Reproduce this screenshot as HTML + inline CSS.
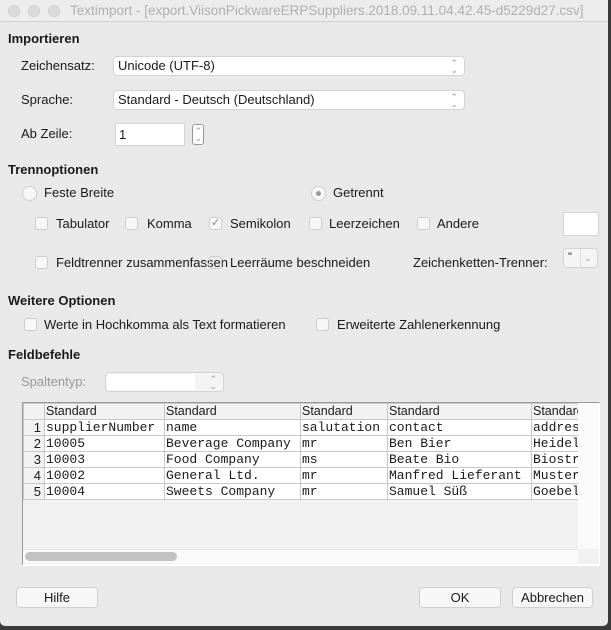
<!DOCTYPE html>
<html><head><meta charset="utf-8"><style>
*{box-sizing:border-box;margin:0;padding:0}
body{width:611px;height:630px;background:#3a3a3a;font-family:"Liberation Sans",sans-serif;font-size:13px;color:#1a1a1a;position:relative;overflow:hidden}
.win{position:absolute;left:0;top:0;width:608px;height:626px;background:#e9e9e9;border-radius:0 0 5px 5px;overflow:hidden}
.title{position:absolute;left:0;top:0;width:608px;height:22px;background:#ececec;border-bottom:1px solid #d0d0d0}
.dot{position:absolute;top:5px;width:12px;height:12px;border-radius:50%;background:#dadada;border:1px solid #d0d0d0}
.tt{position:absolute;left:70px;top:3px;font-size:13.5px;color:#b0b0b0;white-space:nowrap}
.a{position:absolute;white-space:nowrap;line-height:16px}
.b{font-weight:bold}
.inp{position:absolute;background:#fff;border:1px solid #d4d4d4;border-radius:4px}
.cb{position:absolute;width:13px;height:13px;background:#f7f7f7;border:1px solid #cdcdcd;border-radius:3px}
.rd{position:absolute;width:15px;height:15px;background:#f7f7f7;border:1px solid #cdcdcd;border-radius:50%}
.btn{position:absolute;height:21px;background:#f7f7f7;border:1px solid #d0d0d0;border-radius:4px;text-align:center;line-height:19px}
.arr{position:absolute;right:6px;top:3px;font-size:9px;color:#999;line-height:7px;text-align:center}
table{border-collapse:collapse;font-family:"Liberation Mono",monospace;font-size:13px;table-layout:fixed}
td{height:16px;line-height:15px;border:1px solid #c8c8c8;padding:0 1px;overflow:hidden;white-space:nowrap;background:#fff}
td.h{font-family:"Liberation Sans",sans-serif;background:#f2f2f2;font-size:12.5px}
td.n{background:#f2f2f2;text-align:right;padding-right:3px;font-family:"Liberation Sans",sans-serif}
</style></head><body>
<div class="win">
<div class="title">
<div class="dot" style="left:8px"></div><div class="dot" style="left:28px"></div><div class="dot" style="left:48px"></div>
<div class="tt">Textimport - [export.ViisonPickwareERPSuppliers.2018.09.11.04.42.45-d5229d27.csv]</div>
</div>

<div class="a b" style="left:8px;top:31px">Importieren</div>
<div class="a" style="left:21px;top:58px">Zeichensatz:</div>
<div class="inp" style="left:113px;top:56px;width:352px;height:20px"><span class="a" style="left:4px;top:1px">Unicode (UTF-8)</span><div class="arr">⌃<br>⌄</div></div>
<div class="a" style="left:21px;top:92px">Sprache:</div>
<div class="inp" style="left:113px;top:90px;width:352px;height:20px"><span class="a" style="left:4px;top:1px">Standard - Deutsch (Deutschland)</span><div class="arr">⌃<br>⌄</div></div>
<div class="a" style="left:21px;top:126px">Ab Zeile:</div>
<div class="inp" style="left:115px;top:123px;width:70px;height:23px;border-radius:0"><span class="a" style="left:3px;top:3px">1</span></div>
<div class="inp" style="left:192px;top:124px;width:12px;height:21px;border:1px solid #999;border-radius:3px"><div class="arr" style="right:1px;top:3px">⌃<br>⌄</div></div>

<div class="a b" style="left:8px;top:162px">Trennoptionen</div>
<div class="rd" style="left:22px;top:186px"></div><div class="a" style="left:44px;top:185px">Feste Breite</div>
<div class="rd" style="left:311px;top:186px"><div style="position:absolute;left:4px;top:4px;width:5px;height:5px;border-radius:50%;background:#999"></div></div><div class="a" style="left:333px;top:185px">Getrennt</div>

<div class="cb" style="left:35px;top:217px"></div><div class="a" style="left:56px;top:216px">Tabulator</div>
<div class="cb" style="left:125px;top:217px"></div><div class="a" style="left:147px;top:216px">Komma</div>
<div class="cb" style="left:209px;top:217px"><span style="position:absolute;left:1px;top:-2px;font-size:11px;color:#888">✓</span></div><div class="a" style="left:230px;top:216px">Semikolon</div>
<div class="cb" style="left:309px;top:217px"></div><div class="a" style="left:329px;top:216px">Leerzeichen</div>
<div class="cb" style="left:417px;top:217px"></div><div class="a" style="left:437px;top:216px">Andere</div>
<div class="inp" style="left:563px;top:212px;width:36px;height:24px;border-radius:0"></div>

<div class="cb" style="left:35px;top:256px"></div><div class="a" style="left:56px;top:255px">Feldtrenner zusammenfassen</div>
<div class="cb" style="left:209px;top:256px;background:transparent"></div><div class="a" style="left:230px;top:255px">Leerräume beschneiden</div>
<div class="a" style="left:413px;top:255px">Zeichenketten-Trenner:</div>
<div class="inp" style="left:563px;top:248px;width:35px;height:20px;background:#f5f5f5"><span class="a" style="left:4px;top:0px;font-size:11px">"</span><div style="position:absolute;left:16px;top:0;width:1px;height:18px;background:#ddd"></div><span class="a" style="left:20px;top:1px;font-size:9px;color:#999">⌄</span></div>

<div class="a b" style="left:8px;top:293px">Weitere Optionen</div>
<div class="cb" style="left:24px;top:318px"></div><div class="a" style="left:44px;top:317px">Werte in Hochkomma als Text formatieren</div>
<div class="cb" style="left:316px;top:318px"></div><div class="a" style="left:337px;top:317px">Erweiterte Zahlenerkennung</div>

<div class="a b" style="left:8px;top:347px">Feldbefehle</div>
<div class="a" style="left:21px;top:374px;color:#999">Spaltentyp:</div>
<div class="inp" style="left:105px;top:372px;width:119px;height:20px;background:#f4f4f4"><div style="position:absolute;left:1px;top:1px;width:88px;height:16px;background:#fff"></div><div class="arr">⌃<br>⌄</div></div>

<div style="position:absolute;left:22px;top:402px;width:578px;height:164px;background:#f1f1f1;border:1px solid #999;border-right:1px solid #fff;border-bottom:2px solid #fff;overflow:hidden">
<table style="width:570px">
<colgroup><col style="width:21px"><col style="width:120px"><col style="width:136px"><col style="width:87px"><col style="width:144px"><col style="width:62px"></colgroup>
<tr><td class="h"></td><td class="h">Standard</td><td class="h">Standard</td><td class="h">Standard</td><td class="h">Standard</td><td class="h">Standard</td></tr>
<tr><td class="n">1</td><td>supplierNumber</td><td>name</td><td>salutation</td><td>contact</td><td>address</td></tr>
<tr><td class="n">2</td><td>10005</td><td>Beverage Company</td><td>mr</td><td>Ben Bier</td><td>Heidelberg</td></tr>
<tr><td class="n">3</td><td>10003</td><td>Food Company</td><td>ms</td><td>Beate Bio</td><td>Biostrasse</td></tr>
<tr><td class="n">4</td><td>10002</td><td>General Ltd.</td><td>mr</td><td>Manfred Lieferant</td><td>Musterstr</td></tr>
<tr><td class="n">5</td><td>10004</td><td>Sweets Company</td><td>mr</td><td>Samuel Süß</td><td>Goebelstr</td></tr>
</table>
<div style="position:absolute;left:0;top:146px;width:555px;height:14px;background:#fafafa;border-top:1px solid #e6e6e6"></div>
<div style="position:absolute;left:2px;top:149px;width:152px;height:9px;border-radius:5px;background:#c2c2c2"></div>
<div style="position:absolute;left:555px;top:0;width:22px;height:146px;background:#fafafa"></div>
</div>

<div class="btn" style="left:16px;top:587px;width:82px">Hilfe</div>
<div class="btn" style="left:419px;top:587px;width:82px">OK</div>
<div class="btn" style="left:512px;top:587px;width:81px">Abbrechen</div>
</div>
</body></html>
